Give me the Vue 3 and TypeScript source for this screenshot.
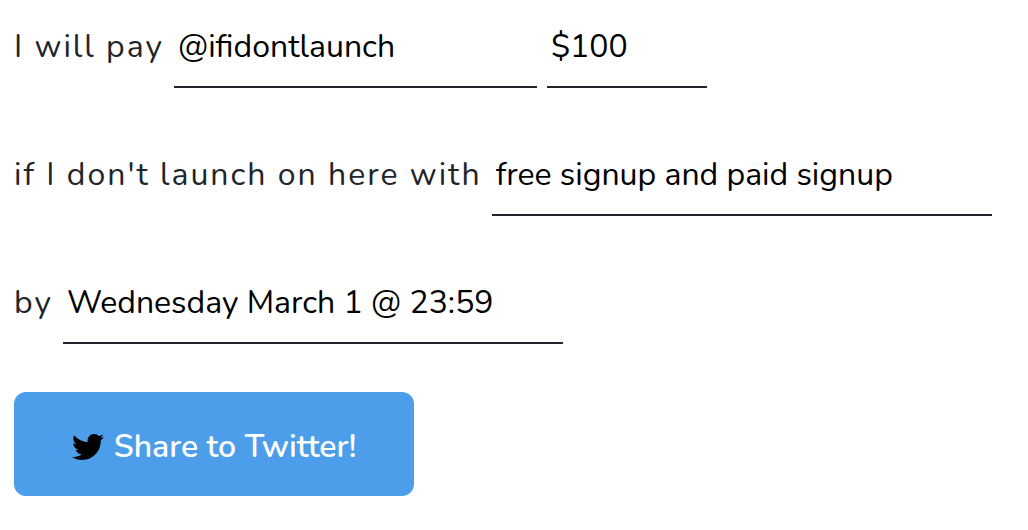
<script setup lang="ts">
import { ref } from 'vue'

const payee = ref<string>('@ifidontlaunch')
const amount = ref<string>('$100')
const goal = ref<string>('free signup and paid signup')
const deadline = ref<string>('Wednesday March 1 @ 23:59')
</script>

<template>
  <form class="pledge" @submit.prevent>
    <div class="row">
      <label class="label" for="payee">I will pay</label>
      <input id="payee" v-model="payee" class="field payee" type="text" spellcheck="false" />
      <input v-model="amount" class="field amount" type="text" aria-label="Amount" />
    </div>
    <div class="row">
      <label class="label" for="goal">if I don't launch on here with</label>
      <input id="goal" v-model="goal" class="field" type="text" spellcheck="false" />
    </div>
    <div class="row">
      <label class="label" for="deadline">by</label>
      <input id="deadline" v-model="deadline" class="field" type="text" spellcheck="false" />
    </div>
    <button class="share" type="submit">
      <svg class="bird" viewBox="0 0 512 512" aria-hidden="true">
        <path
          d="M459.37 151.716c.325 4.548.325 9.097.325 13.645 0 138.72-105.583 298.558-298.558 298.558-59.452 0-114.68-17.219-161.137-47.106 8.447.974 16.568 1.299 25.34 1.299 49.055 0 94.213-16.568 130.274-44.832-46.132-.975-84.792-31.188-98.112-72.772 6.498.974 12.995 1.624 19.818 1.624 9.421 0 18.843-1.3 27.614-3.573-48.081-9.747-84.143-51.98-84.143-102.985v-1.299c13.969 7.797 30.214 12.67 47.431 13.319-28.264-18.843-46.781-51.005-46.781-87.391 0-19.492 5.197-37.36 14.294-52.954 51.655 63.675 129.3 105.258 216.365 109.807-1.624-7.797-2.599-15.918-2.599-24.04 0-57.828 46.782-104.934 104.934-104.934 30.213 0 57.502 12.67 76.67 33.137 23.715-4.548 46.456-13.32 66.599-25.34-7.798 24.366-24.366 44.833-46.132 57.827 21.117-2.273 41.584-8.122 60.426-16.243-14.292 20.791-32.161 39.308-52.628 54.253z"
        />
      </svg>
      <span>Share to Twitter!</span>
    </button>
  </form>
</template>

<style>
body {
  margin: 0;
  background: #fff;
}
</style>

<style scoped>
.pledge {
  padding: 0 14px 34px;
  font-family: Nunito, Lato, "Liberation Sans", sans-serif;
  font-size: 32px;
  line-height: 40px;
  color: #212529;
}

.row {
  display: flex;
  gap: 10px;
  margin-bottom: 40px;
}

.label {
  flex: none;
  padding-top: 27px;
  letter-spacing: 2px;
}

.field {
  box-sizing: border-box;
  flex: 0 1 500px;
  min-width: 0;
  height: 88px;
  margin: 0;
  padding: 26px 4px 20px;
  border: 0;
  border-bottom: 2px solid #212529;
  border-radius: 0;
  outline: 0;
  background: transparent;
  color: #000;
  font: inherit;
}

.payee {
  flex-basis: 363px;
}

.amount {
  flex-basis: 160px;
}

.share {
  display: flex;
  align-items: center;
  justify-content: center;
  gap: 10px;
  width: 400px;
  max-width: 100%;
  height: 104px;
  margin-top: 48px;
  padding: 5px 0 0;
  border: 0;
  border-radius: 12px;
  background: #4c9eeb;
  color: #fff;
  font: inherit;
  font-weight: 600;
  cursor: pointer;
}

.bird {
  width: 32px;
  height: 32px;
  fill: #000;
}
</style>
